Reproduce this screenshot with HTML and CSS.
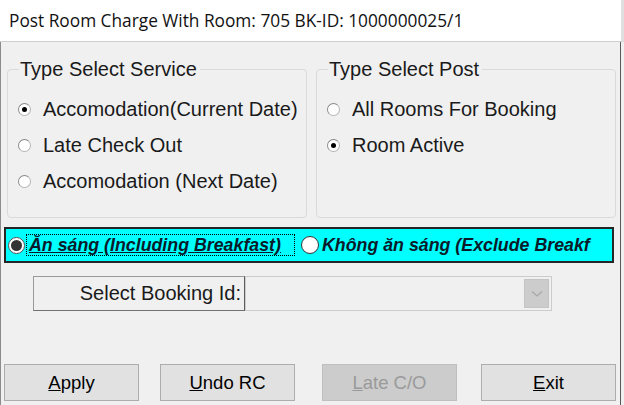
FILE: index.html
```html
<!DOCTYPE html>
<html>
<head>
<meta charset="utf-8">
<link rel="stylesheet" href="styles.css">
</head>
<body>
<div class="title">Post Room Charge With Room: 705 BK-ID: 1000000025/1</div>
<div class="window">
  <div class="groups">
    <fieldset class="group">
      <legend>Type Select Service</legend>
      <div class="row"><span class="rb checked"></span><span>Accomodation(Current Date)</span></div>
      <div class="row"><span class="rb"></span><span>Late Check Out</span></div>
      <div class="row"><span class="rb"></span><span>Accomodation (Next Date)</span></div>
    </fieldset>
    <fieldset class="group">
      <legend>Type Select Post</legend>
      <div class="row"><span class="rb"></span><span>All Rooms For Booking</span></div>
      <div class="row"><span class="rb checked"></span><span>Room Active</span></div>
    </fieldset>
  </div>
  <div class="cyan">
    <span class="brb checked"></span>
    <span class="focus"><u>Ăn sáng (Including Breakfast)</u></span>
    <span class="brb second"></span>
    <span class="opt2">Không ăn sáng (Exclude Breakf</span>
  </div>
  <div class="booking">
    <div class="blabel">Select Booking Id:</div>
    <div class="combo">
      <div class="arrow">
        <svg width="12" height="8" viewBox="0 0 12 8"><path d="M1 1.5 L6 6 L11 1.5" fill="none" stroke="#a8a8a8" stroke-width="1.2"/></svg>
      </div>
    </div>
  </div>
  <div class="buttons">
    <div class="btn"><u>A</u>pply</div>
    <div class="btn b2"><u>U</u>ndo RC</div>
    <div class="btn b3 disabled"><u>L</u>ate C/O</div>
    <div class="btn b4"><u>E</u>xit</div>
  </div>
</div>
</body>
</html>
```
FILE: styles.css
```css
html, body {
  margin: 0;
  padding: 0;
}
body {
  width: 624px;
  height: 405px;
  overflow: hidden;
  background: #f0f0f0;
  font-family: "Liberation Sans", Arial, sans-serif;
  color: #000;
}
.title {
  height: 42px;
  box-sizing: border-box;
  background: #fff;
  border-bottom: 1px solid #cfcfcf;
  border-right: 3px solid #e0e0e0;
  padding-left: 9px;
  font-family: "Open Sans", "Noto Sans", sans-serif;
  font-size: 17.3px;
  line-height: 41px;
  color: #111;
  white-space: nowrap;
}
.window {
  width: 621px;
  height: 363px;
  box-sizing: border-box;
  border-left: 1px solid #8c8c8c;
  border-right: 1px solid #5a5a5a;
}
.groups {
  display: flex;
  gap: 9px;
  padding: 16px 0 0 6px;
}
.group {
  margin: 0;
  width: 300px;
  height: 160px;
  box-sizing: border-box;
  border: 1px solid #dadada;
  border-radius: 4px;
  padding: 11px 0 0 10px;
  font-size: 20px;
}
.group legend {
  padding: 0 3px 0 1px;
  margin-left: 1px;
  font-size: 20px;
  line-height: 22px;
  color: #1a1a1a;
}
.row {
  display: flex;
  align-items: center;
  height: 36.3px;
  gap: 12px;
  color: #1a1a1a;
  white-space: nowrap;
}
.rb {
  width: 13px;
  height: 13px;
  border-radius: 50%;
  box-sizing: border-box;
  border: 1px solid #b4b4b4;
  border-top-color: #8a8a8a;
  border-left-color: #8a8a8a;
  background: #fff;
  display: flex;
  align-items: center;
  justify-content: center;
  flex: none;
}
.rb.checked::after {
  content: "";
  width: 5px;
  height: 5px;
  border-radius: 50%;
  background: #000;
}
.cyan {
  margin: 9px 0 0 3px;
  width: 610px;
  height: 36px;
  box-sizing: border-box;
  background: #00ffff;
  border: 2px solid #262626;
  display: flex;
  align-items: center;
  padding-left: 2px;
  font-size: 17.8px;
  font-weight: bold;
  font-style: italic;
  color: #0a1a2a;
  white-space: nowrap;
  overflow: hidden;
}
.brb {
  width: 17px;
  height: 17px;
  box-sizing: border-box;
  border-radius: 50%;
  border: 1px solid #333;
  background: #fff;
  flex: none;
  display: flex;
  align-items: center;
  justify-content: center;
}
.brb.checked {
  border-color: #555;
  background: #fff;
}
.brb.checked::after {
  content: "";
  width: 11px;
  height: 11px;
  border-radius: 50%;
  background: #333;
}
.focus {
  margin-left: 1px;
  width: 269px;
  height: 22px;
  box-sizing: border-box;
  border: 1px dotted #000;
  padding-left: 2px;
  line-height: 20px;
  overflow: hidden;
}
.brb.second {
  margin-left: 6px;
  width: 18px;
  height: 18px;
}
.opt2 {
  margin-left: 3px;
}
.booking {
  display: flex;
  margin: 13px 0 0 32px;
  height: 35px;
}
.blabel {
  width: 212px;
  box-sizing: border-box;
  border: 1px solid #9a9a9a;
  border-right-color: #5c5c5c;
  border-bottom-color: #707070;
  text-align: right;
  padding-right: 3px;
  font-size: 20px;
  line-height: 33px;
  color: #1a1a1a;
}
.combo {
  width: 307px;
  box-sizing: border-box;
  border: 1px solid #cccccc;
  background: #f0f0f0;
  display: flex;
  justify-content: flex-end;
  align-items: center;
  padding-right: 2px;
}
.arrow {
  width: 25px;
  height: 29px;
  box-sizing: border-box;
  background: #cccccc;
  border: 1px solid #c4c4c4;
  display: flex;
  align-items: center;
  justify-content: center;
}
.buttons {
  display: flex;
  margin: 53px 0 0 3px;
}
.btn {
  width: 135px;
  height: 37px;
  box-sizing: border-box;
  background: #e1e1e1;
  border: 1px solid #adadad;
  font-size: 18.5px;
  line-height: 35px;
  text-align: center;
  color: #000;
}
.btn.b2 { margin-left: 21px; }
.btn.b3 { margin-left: 27px; }
.btn.b4 { margin-left: 24px; }
.btn.disabled {
  background: #cccccc;
  border-color: #bfbfbf;
  color: #9a9a9a;
}
```
